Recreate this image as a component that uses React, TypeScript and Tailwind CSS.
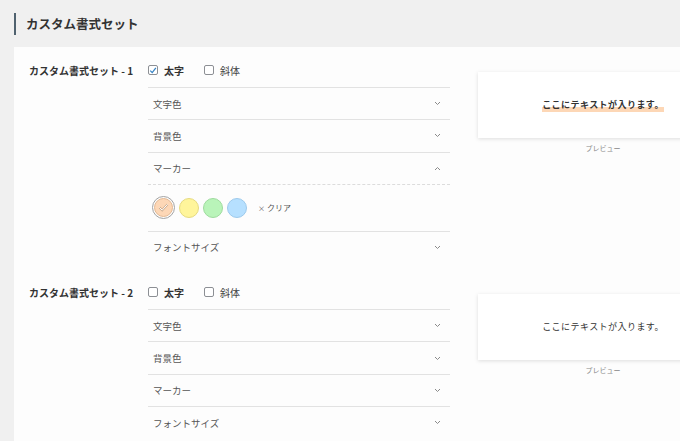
import React from "react"

const font = "font-['Noto_Sans_CJK_JP',sans-serif]"

const Checkbox = ({ checked }: { checked: boolean }) => (
    <span className="w-[10px] h-[10px] border border-[#8c8f94] rounded-[2px] bg-white flex items-center justify-center">
        {checked && (
            <svg width="9" height="9" viewBox="0 0 10 10">
                <path d="M1.6 5.2 L4 7.6 L8.6 1.8" fill="none" stroke="#3582c4" strokeWidth="1.6" />
            </svg>
        )}
    </span>
)

const Chevron = ({ up }: { up?: boolean }) => (
    <svg width="7" height="5" viewBox="0 0 7 5" className="text-[#8a8a8a]">
        <path d={up ? "M1 4 L3.5 1.5 L6 4" : "M1 1 L3.5 3.5 L6 1"} fill="none" stroke="currentColor" strokeWidth="1" />
    </svg>
)

const Item = ({ label, open }: { label: string; open?: boolean }) => (
    <div className="h-[32.3px] border-t border-[#e2e2e2] flex items-center justify-between pl-[5px] pr-[9px] text-[9.5px] text-[#555]">
        <span>{label}</span>
        <Chevron up={open} />
    </div>
)

const marcadores = [
    { bg: "bg-[#fdd7b6]", borde: "border-[#e3b892]" },
    { bg: "bg-[#fff59b]", borde: "border-[#e6db80]" },
    { bg: "bg-[#b9f4b9]", borde: "border-[#9edb9e]" },
    { bg: "bg-[#b6e0ff]", borde: "border-[#9dcaec]" },
]

const MarkerPanel = () => (
    <div className="h-[47px] border-t border-dashed border-[#dcdcdc] flex items-center pl-[4px]">
        <div className="flex items-center gap-[4px]">
            {marcadores.map((m, i) =>
                i === 0 ? (
                    <div key={i} className="w-[23px] h-[23px] rounded-full border border-[#a3a3a3] p-[1px]">
                        <div className={`w-full h-full rounded-full ${m.bg} border ${m.borde} flex items-center justify-center`}>
                            <svg width="11" height="9" viewBox="0 0 11 9">
                                <path d="M1.5 4.5 L4.2 7.2 L9.5 1.3" fill="none" stroke="#c9a88a" strokeWidth="2" />
                                <path d="M1.5 4.5 L4.2 7.2 L9.5 1.3" fill="none" stroke="#ffffff" strokeWidth="1" />
                            </svg>
                        </div>
                    </div>
                ) : (
                    <div key={i} className={`w-[20px] h-[20px] rounded-full ${m.bg} border ${m.borde}`} />
                )
            )}
        </div>
        <span className="ml-[11px] text-[8px] text-[#555]">
            <span className="text-[7px] mr-[2px]">×</span>クリア
        </span>
    </div>
)

const FormatSet = ({ numero, bold, markerOpen }: { numero: number; bold: boolean; markerOpen: boolean }) => (
    <div className="flex py-[6px]">
        <div className="w-[134px] pl-[15px] h-[34px] flex items-center text-[10px] font-bold text-[#333]">
            カスタム書式セット - {numero}
        </div>

        <div className="w-[302px]">
            <div className="h-[34px] flex items-center text-[10px] text-[#333]">
                <Checkbox checked={bold} />
                <span className="ml-[6px] font-bold">太字</span>
                <span className="ml-[20px]"><Checkbox checked={false} /></span>
                <span className="ml-[6px] text-[#444]">斜体</span>
            </div>
            <Item label="文字色" />
            <Item label="背景色" />
            <Item label="マーカー" open={markerOpen} />
            {markerOpen && <MarkerPanel />}
            <Item label="フォントサイズ" />
        </div>

        <div className="ml-[28px] mt-[19px] w-[250px]">
            <div className="h-[66px] bg-white shadow-[0_1px_4px_rgba(0,0,0,0.13)] flex items-center justify-center">
                <span
                    className={`text-[9px] tracking-[0.45px] text-[#333] ${bold ? "font-bold bg-[linear-gradient(transparent_62%,#fdd7b6_62%)]" : ""}`}
                >
                    ここにテキストが入ります。
                </span>
            </div>
            <div className="mt-[5px] text-center text-[7px] text-[#888]">プレビュー</div>
        </div>
    </div>
)

const App = () => {
    return (
        <div className={`w-[680px] h-[441px] overflow-hidden bg-[#f0f0f0] ${font}`}>
            <div className="pt-[13px] pl-[14px]">
                <h2 className="h-[22px] border-l-2 border-[#50626f] pl-[10px] flex items-center text-[12.5px] font-bold text-[#333]">
                    カスタム書式セット
                </h2>
            </div>

            <div className="ml-[14px] mt-[12px] w-[720px] h-[400px] bg-[#fdfdfd]">
                <FormatSet numero={1} bold={true} markerOpen={true} />
                <FormatSet numero={2} bold={false} markerOpen={false} />
            </div>
        </div>
    )
}

export default App
